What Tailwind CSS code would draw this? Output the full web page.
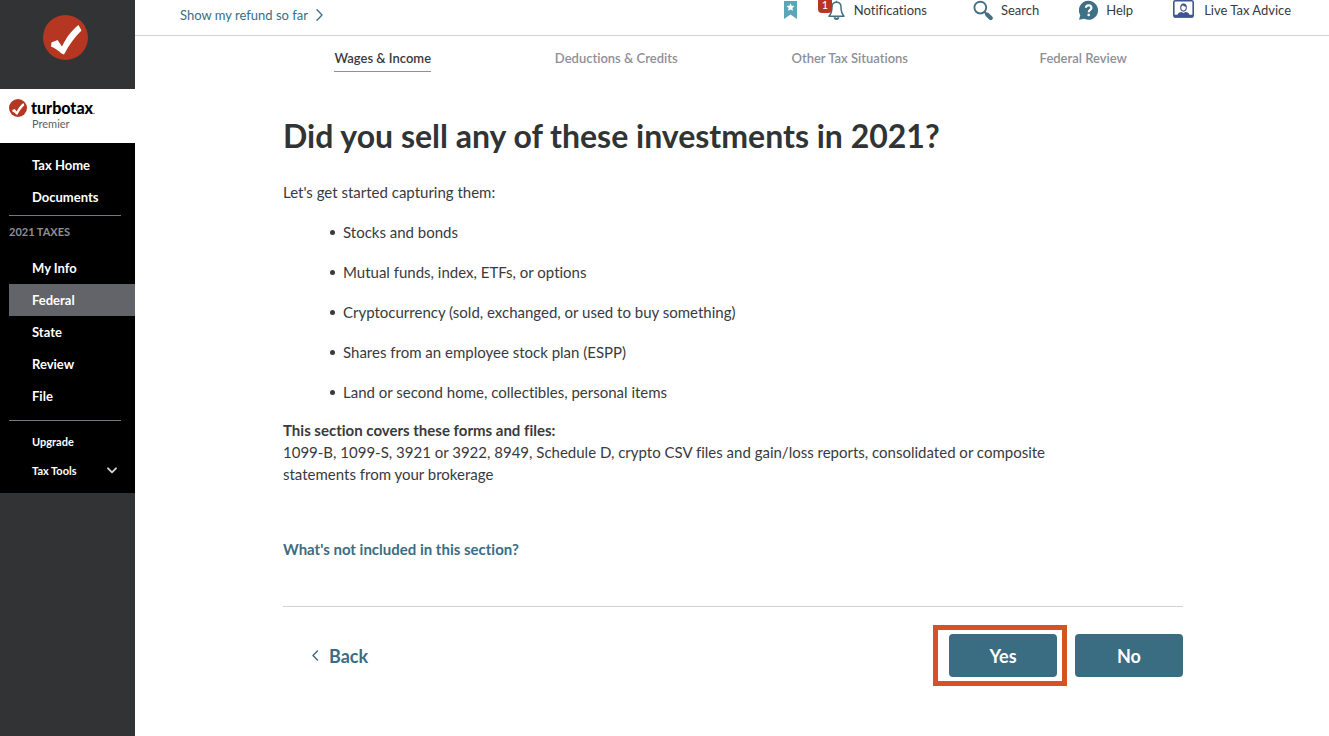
<!DOCTYPE html>
<html lang="en">
<head>
  <meta charset="UTF-8" />
  <meta name="viewport" content="width=device-width, initial-scale=1.0" />
  <title>TurboTax Premier - Wages &amp; Income</title>
  <script src="https://cdn.jsdelivr.net/npm/@tailwindcss/browser@4"></script>
</head>
<body class="flex min-h-screen bg-white font-['Lato','Open_Sans',sans-serif] text-[#393a3d] [font-variant-ligatures:no-common-ligatures]">

<!-- Sidebar -->
<aside class="w-[135px] shrink-0 bg-[#313335]">
  <div class="flex h-[89px] justify-center pt-[15px] pr-1">
    <svg class="size-[45px]" viewBox="0 0 45 45" aria-label="TurboTax">
      <circle cx="22.5" cy="22.5" r="22.5" fill="#b53621" />
      <path d="M8.500 27.500l6-2.500 4.500 6.500C23 23 28 16 35.500 10l3 5.500C32 22 26 29.500 21 39.500L18.500 38.500C15.500 35.500 12.500 33.500 8 31.500z" fill="#fff" />
    </svg>
  </div>

  <div class="h-[54px] bg-white pt-2.5 pl-[9px]">
    <div class="flex items-start gap-1">
      <svg class="size-[18px] shrink-0" viewBox="0 0 45 45" aria-hidden="true">
        <circle cx="22.5" cy="22.5" r="22.5" fill="#b53621" />
        <path d="M8.500 27.500l6-2.500 4.500 6.500C23 23 28 16 35.500 10l3 5.500C32 22 26 29.500 21 39.500L18.500 38.500C15.500 35.500 12.500 33.500 8 31.500z" fill="#fff" />
      </svg>
      <span class="text-base leading-[18px] font-black text-black">turbotax<span class="text-[8px] font-normal">.</span></span>
    </div>
    <div class="pl-[23px] text-[11px] leading-2 text-[#5d5e66]">Premier</div>
  </div>

  <nav class="bg-black pt-1.5 pb-2 pl-[9px] text-[13px] font-bold text-white">
    <a href="#" class="block pl-[23px] leading-8">Tax Home</a>
    <a href="#" class="block pl-[23px] leading-8">Documents</a>
    <hr class="mt-0.5 mr-3.5 border-[#77787d]" />
    <h2 class="pt-2 pb-3 text-[11px] leading-4 text-[#8d9096]">2021 TAXES</h2>
    <a href="#" class="block pl-[23px] leading-8">My Info</a>
    <a href="#" class="block bg-[#63646a] pl-[23px] leading-8">Federal</a>
    <a href="#" class="block pl-[23px] leading-8">State</a>
    <a href="#" class="block pl-[23px] leading-8">Review</a>
    <a href="#" class="block pl-[23px] leading-8">File</a>
    <hr class="mt-2 mr-3.5 mb-[7px] border-[#77787d]" />
    <a href="#" class="block pl-[23px] text-[11px] leading-7">Upgrade</a>
    <button type="button" class="flex w-full items-center justify-between pr-[18px] pl-[23px] text-[11px] leading-[29px]">
      Tax Tools
      <svg class="h-[7px] w-2.5" viewBox="0 0 10 7" fill="none" stroke="#d4d7dc" stroke-width="1.8" stroke-linecap="round" stroke-linejoin="round"><path d="M1 1.300l4 4 4-4" /></svg>
    </button>
  </nav>
</aside>

<div class="min-w-0 flex-1">

  <!-- Top bar -->
  <header class="flex h-9 items-start justify-between border-b border-[#cfd1d5] pr-[38px] pl-[45px] text-[13px] leading-5">
    <a href="#" class="flex items-center gap-2 pt-[5px] text-[#3b6d82]">
      Show my refund so far
      <svg class="h-3 w-[7px]" viewBox="0 0 7 12" fill="none" stroke="currentColor" stroke-width="1.3" stroke-linecap="round" stroke-linejoin="round"><path d="M1 .8l5 5.200-5 5.200" /></svg>
    </a>

    <div class="flex">
      <button type="button" aria-label="Bookmark" class="mr-[21px] h-5">
        <svg class="h-5 w-[13px]" viewBox="0 0 13 20">
          <path d="M0 1h13v18l-6.500-4.500L0 19z" fill="#5ba5b9" />
          <path d="M6.500 3.200l1.200 2.600 2.800.3-2.100 1.900.6 2.800-2.500-1.400L4 10.800 4.600 8 2.500 6.100l2.800-.3z" fill="#fff" />
        </svg>
      </button>
      <button type="button" class="relative mr-[46px] flex h-5 items-center gap-[9px] pl-2.5">
        <svg class="h-5 w-[17px]" viewBox="0 0 17 20" fill="none" stroke="#456f82" stroke-width="1.5" stroke-linejoin="round">
          <path d="M8.500 2.200C5.600 2.200 4 4.200 4 7c0 5-1 7-3 9.300h15C14 14 13 12 13 7c0-2.800-1.600-4.800-4.500-4.800zM8.500 2.200V.8" />
          <path d="M6.700 17.200a1.800 1.800 0 0 0 3.600 0" stroke-width="2" />
        </svg>
        <span class="absolute top-0 left-0 h-[13px] w-3.5 rounded-b-sm bg-[#b53621] text-center text-[11px] leading-[9px] text-white">1</span>
        Notifications
      </button>
      <button type="button" class="mr-10 flex h-5 items-center gap-2">
        <svg class="size-5" viewBox="0 0 20 20" fill="none" stroke="#456f82">
          <circle cx="7.300" cy="7.600" r="5.900" stroke-width="1.900" />
          <path d="M11.500 12l3 2.700" stroke-width="2.200" />
          <path d="M14.300 14.800l3.400 3.200" stroke-width="4.200" stroke-linecap="round" />
        </svg>
        Search
      </button>
      <button type="button" class="mr-10 flex h-5 items-center gap-2">
        <svg class="h-5 w-[19px]" viewBox="0 0 19 20">
          <path d="M9.500.8a9.500 9.500 0 1 1-4.200 18L0 19.800l1.300-4.600A9.500 9.500 0 0 1 9.500.8z" fill="#3f7186" />
          <path d="M6.900 7.800c.2-3.200 5.500-3.200 5.500.1 0 2-2.700 2-2.700 4.300" fill="none" stroke="#fff" stroke-width="2.100" />
          <circle cx="9.700" cy="14.900" r="1.300" fill="#fff" />
        </svg>
        Help
      </button>
      <button type="button" class="flex h-5 items-center gap-2.5">
        <svg class="h-5 w-[21px]" viewBox="0 0 21 20">
          <rect x=".8" y=".8" width="19.400" height="16.200" rx="1.500" fill="#fff" stroke="#40558f" stroke-width="1.600" />
          <path d="M1 14.800h3.500c.4-2 2-2.700 4-2.900l2 1.200 2-1.200c2 .2 3.600.9 4 2.900H20v2.700H1z" fill="#40558f" />
          <ellipse cx="10.500" cy="7.600" rx="2.800" ry="3.500" fill="#fff" stroke="#40558f" stroke-width="1.100" />
          <path d="M7.700 6.800c.2-4 5.400-4 5.600 0-2-.2-2.800-.8-3.500-1.500-.4.800-1.200 1.300-2.100 1.500z" fill="#40558f" />
        </svg>
        Live Tax Advice
      </button>
    </div>
  </header>

  <!-- Section tabs -->
  <nav class="mx-auto grid max-w-[936px] grid-cols-4 justify-items-center pt-3 pl-0.5 text-[13px] leading-5 font-semibold text-[#8d9096]">
    <a href="#" aria-current="page" class="border-b border-[#5ba5b9] pb-[3px] text-[#393a3d]">Wages &amp; Income</a>
    <a href="#">Deductions &amp; Credits</a>
    <a href="#">Other Tax Situations</a>
    <a href="#">Federal Review</a>
  </nav>

  <main class="mx-auto max-w-[902px] pt-11 pl-0.5 text-[15px] leading-[22px]">
    <h1 class="text-[32px] leading-10 font-bold text-[#313335]">Did you sell any of these investments in 2021?</h1>

    <p class="mt-[25px]">Let's get started capturing them:</p>
    <ul class="mt-[18px] space-y-[18px] pl-[47px]">
      <li class="flex items-center gap-2 before:size-[5px] before:rounded-full before:bg-[#393a3d]">Stocks and bonds</li>
      <li class="flex items-center gap-2 before:size-[5px] before:rounded-full before:bg-[#393a3d]">Mutual funds, index, ETFs, or options</li>
      <li class="flex items-center gap-2 before:size-[5px] before:rounded-full before:bg-[#393a3d]">Cryptocurrency (sold, exchanged, or used to buy something)</li>
      <li class="flex items-center gap-2 before:size-[5px] before:rounded-full before:bg-[#393a3d]">Shares from an employee stock plan (ESPP)</li>
      <li class="flex items-center gap-2 before:size-[5px] before:rounded-full before:bg-[#393a3d]">Land or second home, collectibles, personal items</li>
    </ul>

    <h2 class="mt-4 font-bold">This section covers these forms and files:</h2>
    <p class="max-w-[780px]">1099-B, 1099-S, 3921 or 3922, 8949, Schedule D, crypto CSV files and gain/loss reports, consolidated or composite statements from your brokerage</p>

    <a href="#" class="mt-[53px] inline-block font-bold text-[#3b6d82]">What's not included in this section?</a>

    <div class="mt-[46px] flex items-center justify-between border-t border-[#cfd1d5] pt-[18px]">
      <button type="button" class="ml-7 flex items-center gap-2.5 text-lg font-bold text-[#3b6d82]">
        <svg class="h-[11px] w-2" viewBox="0 0 8 11" fill="none" stroke="currentColor" stroke-width="1.5" stroke-linecap="round" stroke-linejoin="round"><path d="M6.500 1L2 5.500 6.500 10" /></svg>
        Back
      </button>
      <div class="flex items-center gap-2">
        <div class="border-[5px] border-[#d35322] py-1 pr-[5px] pl-[11px]">
          <button type="button" class="block h-[43px] w-[108px] rounded bg-[#3b6d82] text-lg font-bold text-white">Yes</button>
        </div>
        <button type="button" class="h-[43px] w-[108px] rounded bg-[#3b6d82] text-lg font-bold text-white">No</button>
      </div>
    </div>
  </main>
</div>

</body>
</html>
